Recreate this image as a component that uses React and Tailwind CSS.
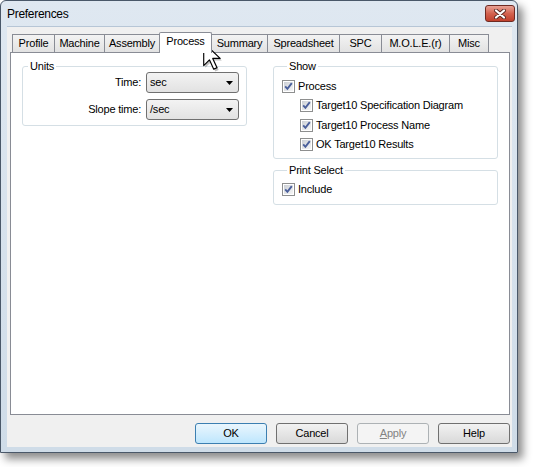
const TABS = [
  { label: "Profile", w: "w-[43px]" },
  { label: "Machine", w: "w-[51px]" },
  { label: "Assembly", w: "w-[56px]" },
  { label: "Process", w: "w-[53px]", active: true },
  { label: "Summary", w: "w-[57px]" },
  { label: "Spreadsheet", w: "w-[73px]" },
  { label: "SPC", w: "w-[43px]" },
  { label: "M.O.L.E.(r)", w: "w-[69px]" },
  { label: "Misc", w: "w-[40px]" },
];

function Checkbox() {
  return (
    <svg width="13" height="13" viewBox="0 0 13 13" className="shrink-0">
      <defs>
        <linearGradient id="cbfill" x1="0" y1="0" x2="1" y2="1">
          <stop offset="0" stopColor="#cbcfd5" />
          <stop offset="1" stopColor="#f6f6f6" />
        </linearGradient>
      </defs>
      <rect x="0.5" y="0.5" width="12" height="12" fill="#fff" stroke="#8e8f8f" />
      <rect x="2" y="2" width="9" height="9" fill="url(#cbfill)" />
      <path d="M3.2 6.4 L5.4 8.8 L9.8 3.2" fill="none" stroke="#4a5f9b" strokeWidth="1.9" />
    </svg>
  );
}

function Check({ label, indent }) {
  return (
    <div className={`flex items-center gap-[3px] ${indent ? "pl-[18px]" : ""}`}>
      <Checkbox />
      <span>{label}</span>
    </div>
  );
}

function Select({ value }) {
  return (
    <div className="w-[93px] h-[21px] border border-[#707070] rounded-[3px] bg-gradient-to-b from-[#f3f3f3] to-[#e2e2e2] flex items-center justify-between pl-[3px] pr-[5px]">
      <span>{value}</span>
      <svg width="7" height="4" viewBox="0 0 7 4">
        <path d="M0 0 H7 L3.5 4 Z" fill="#000" />
      </svg>
    </div>
  );
}

function Group({ title, className = "", children }) {
  return (
    <fieldset className={`border border-[#d5dfe5] rounded-[3px] ${className}`}>
      <legend className="ml-[5px] px-[2px] leading-[12px]">{title}</legend>
      {children}
    </fieldset>
  );
}

function Button({ children, variant }) {
  const styles = {
    default: "border-[#3c7fb1] bg-gradient-to-b from-[#eaf6fd] to-[#bee6fd] text-black",
    normal: "border-[#707070] bg-gradient-to-b from-[#f2f2f2] to-[#d9d9d9] text-black",
    disabled: "border-[#adb2b5] bg-[#f4f4f4] text-[#838383]",
  };
  return (
    <div
      className={`w-[72px] h-[21px] border rounded-[3px] flex items-center justify-center ${styles[variant]}`}
    >
      {children}
    </div>
  );
}

export default function App() {
  return (
    <div
      className="relative w-[533px] h-[467px] bg-white text-[11px] tracking-[-0.2px] text-black"
      style={{ fontFamily: '"Liberation Sans", Arial, sans-serif' }}
    >
      {/* Window */}
      <div className="w-[518px] h-[453px] border border-[#4a5869] rounded-t-[6px] bg-gradient-to-b from-[#dfe8f1] to-[#cfdce8] shadow-[5px_6px_9px_rgba(0,0,0,0.45)] flex flex-col">
        {/* Title bar */}
        <div className="h-[25px] flex items-start justify-between pl-[6px] pr-[2px]">
          <span className="mt-[6px] text-[12px] tracking-[-0.3px] leading-[14px]">Preferences</span>
          <div className="mt-[4px] w-[30px] h-[17px] rounded-[3px] border border-[#6e2a22] bg-gradient-to-b from-[#e7a195] via-[#d3624f] to-[#c0402c] flex items-center justify-center">
            <svg width="12" height="10" viewBox="0 0 12 10">
              <path d="M2 1.5 L10 8.5 M10 1.5 L2 8.5" stroke="#5a2a25" strokeWidth="4" strokeLinecap="round" />
              <path d="M2 1.5 L10 8.5 M10 1.5 L2 8.5" stroke="#fff" strokeWidth="2.2" strokeLinecap="round" />
            </svg>
          </div>
        </div>

        {/* Client area */}
        <div className="ml-[6px] mr-[5px] mb-[5px] flex-1 bg-[#f0f0f0] border-t border-[#b7c6d6] flex flex-col pt-[5px]">
          {/* Tabs */}
          <div className="h-[20px] flex items-end ml-[5px]">
            {TABS.map((t, i) => (
              <div
                key={t.label}
                className={[
                  t.w,
                  "border border-b-0 border-[#898c95] flex items-center justify-center",
                  i > 0 ? "-ml-px" : "",
                  t.active
                    ? "h-[21px] -mb-px bg-white relative z-10 rounded-t-[2px] pb-[3px]"
                    : "h-[18px] bg-gradient-to-b from-[#f3f3f3] to-[#e2e2e2]",
                ].join(" ")}
              >
                {t.label}
              </div>
            ))}
          </div>

          {/* Panel */}
          <div className="ml-[3px] mr-[2px] h-[363px] border border-[#898c95] bg-white flex gap-[26px] pl-[11px] pt-[7px]">
            <Group title="Units" className="w-[225px] self-start pr-[7px] pb-[5px]">
              <div className="flex flex-col gap-[6px] pt-[0px]">
                <div className="flex items-center justify-end gap-[5px]">
                  <span>Time:</span>
                  <Select value="sec" />
                </div>
                <div className="flex items-center justify-end gap-[5px]">
                  <span>Slope time:</span>
                  <Select value="/sec" />
                </div>
              </div>
            </Group>

            <div className="flex flex-col gap-[5px]">
              <Group title="Show" className="w-[225px] pl-[8px] pt-[4px] pb-[4px]">
                <div className="h-[20px] flex items-center">
                  <Check label="Process" />
                </div>
                <div className="h-[19px] flex items-center">
                  <Check label="Target10 Specification Diagram" indent />
                </div>
                <div className="h-[20px] flex items-center">
                  <Check label="Target10 Process Name" indent />
                </div>
                <div className="h-[19px] flex items-center">
                  <Check label="OK Target10 Results" indent />
                </div>
              </Group>
              <Group title="Print Select" className="w-[225px] pl-[8px] pt-[4px] pb-[5px]">
                <div className="h-[19px] flex items-center">
                  <Check label="Include" />
                </div>
              </Group>
            </div>
          </div>

          {/* Buttons */}
          <div className="mt-[8px] mr-[2px] flex justify-end gap-[9px]">
            <Button variant="default">OK</Button>
            <Button variant="normal">Cancel</Button>
            <Button variant="disabled">
              <span>
                <span className="underline">A</span>pply
              </span>
            </Button>
            <Button variant="normal">Help</Button>
          </div>
        </div>
      </div>

      {/* Mouse cursor over the Process tab */}
      <svg
        className="absolute left-[203px] top-[42px]"
        width="20"
        height="30"
        viewBox="0 0 14 21"
      >
        <path d="M1.6 1.6 V18 L5.6 14 L8.6 20.6 L11 19.6 L8 13 H13.2 Z" fill="rgba(0,0,0,0.25)" />
        <path
          d="M0.5 0.5 V16.5 L4.5 12.5 L7.5 19 L9.8 18 L6.8 11.5 H12 Z"
          fill="#fff"
          stroke="#000"
          strokeWidth="0.8"
          strokeLinejoin="round"
        />
      </svg>
    </div>
  );
}
